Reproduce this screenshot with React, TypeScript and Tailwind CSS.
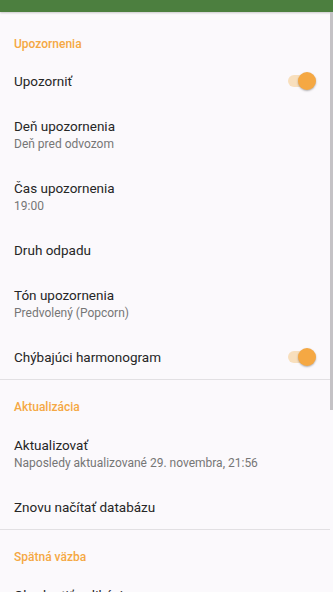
const font = { fontFamily: 'Roboto, "Noto Sans", sans-serif' };

function Header({ label, first }: { label: string; first?: boolean }) {
  return (
    <div className={first ? 'h-[46px] pt-[24px] pl-[14px]' : 'h-[42px] pt-[19px] pl-[14px]'}>
      <div className="text-[12px] leading-[16px] font-medium text-[#f5a843]">{label}</div>
    </div>
  );
}

function Toggle() {
  return (
    <div className="relative w-[30px] h-[20px] flex items-center">
      <div className="w-[22px] h-[12px] rounded-full bg-[#f8dfbd] ml-[2px]" />
      <div className="absolute right-0 top-[1px] w-[18px] h-[18px] rounded-full bg-[#f5a843] shadow-[0_1px_2px_rgba(0,0,0,0.3)]" />
    </div>
  );
}

function Single({ title, toggle }: { title: string; toggle?: boolean }) {
  return (
    <div className="h-[45px] flex items-center justify-between pl-[14px] pr-[14px]">
      <div className="text-[13.5px] leading-[18px] text-[#262626]">{title}</div>
      {toggle && <Toggle />}
    </div>
  );
}

function Double({ title, sub }: { title: string; sub: string }) {
  return (
    <div className="pt-[14px] pb-[13px] pl-[14px]">
      <div className="text-[13.5px] leading-[18px] text-[#262626]">{title}</div>
      <div className="text-[12px] leading-[16px] mt-[1px] text-[#767676]">{sub}</div>
    </div>
  );
}

export default function App() {
  return (
    <div className="relative w-[333px] h-[592px] overflow-hidden bg-[#fbf9fc]" style={font}>
      <div className="h-[12px] bg-[#4c7f3f] shadow-[0_1px_2px_rgba(0,0,0,0.2)]" />
      <div className="pr-[3px]">
        <Header label="Upozornenia" first />
        <Single title="Upozorniť" toggle />
        <Double title="Deň upozornenia" sub="Deň pred odvozom" />
        <Double title="Čas upozornenia" sub="19:00" />
        <Single title="Druh odpadu" />
        <Double title="Tón upozornenia" sub="Predvolený (Popcorn)" />
        <Single title="Chýbajúci harmonogram" toggle />
        <div className="h-px bg-[#e2e0e3]" />
        <Header label="Aktualizácia" />
        <Double title="Aktualizovať" sub="Naposledy aktualizované 29. novembra, 21:56" />
        <Single title="Znovu načítať databázu" />
        <div className="h-px bg-[#e2e0e3]" />
        <Header label="Spätná väzba" />
        <Single title="Ohodnotiť aplikáciu" />
      </div>
      <div className="absolute right-0 top-[12px] w-[3px] h-[398px] bg-[#c4c2c5]" />
    </div>
  );
}
